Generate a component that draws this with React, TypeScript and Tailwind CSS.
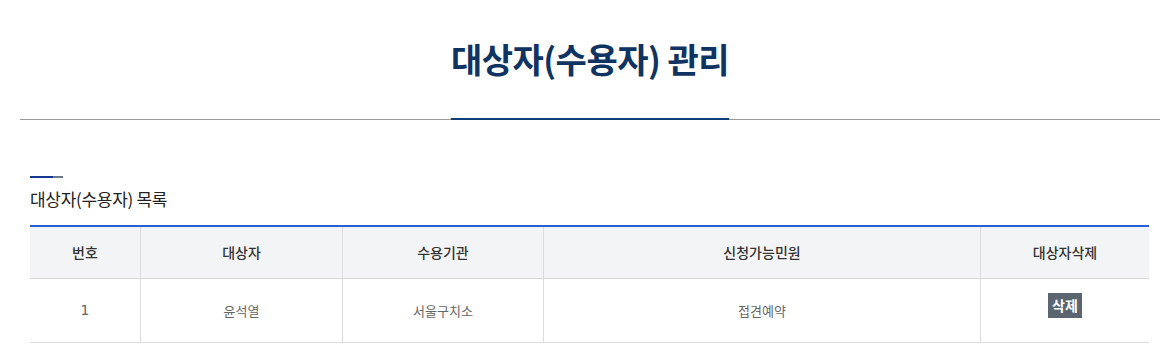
const font = "font-['Noto_Sans_CJK_KR','Noto_Sans',sans-serif]"

const columns = [
  { label: "번호", width: "w-[110px]" },
  { label: "대상자", width: "w-[202px]" },
  { label: "수용기관", width: "w-[201px]" },
  { label: "신청가능민원", width: "w-[437px]" },
  { label: "대상자삭제", width: "flex-1" },
]

const rows = [{ no: 1, name: "윤석열", agency: "서울구치소", service: "접견예약" }]

export default function App() {
  return (
    <div className={`${font} min-h-[360px] bg-white`}>
      <div className="ml-[20px] w-[1140px]">
        {/* page title with underline */}
        <div className="flex justify-center border-b border-[#9a9a9a] pt-[35px]">
          <h1 className="-mb-px border-b-2 border-[#0d3f78] pb-[35px] text-[34px] font-bold leading-[48px] tracking-[-0.5px] text-[#0f3462]">
            대상자(수용자) 관리
          </h1>
        </div>

        <section className="px-[10px] pt-[56px]">
          <div className="flex h-[2px] w-[33px]">
            <span className="w-[23px] bg-[#16378f]" />
            <span className="flex-1 bg-[#6b7a8c]" />
          </div>
          <h2 className="mt-[9px] text-[17px] leading-[24px] tracking-[-0.3px] text-[#222]">대상자(수용자) 목록</h2>

          <div className="mt-[14px] w-[1119px] border-t-2 border-[#2a5ed6]">
            <div className="flex h-[52px] border-b border-[#d6d6d6] bg-[#f3f4f6]">
              {columns.map((c, i) => (
                <div
                  key={c.label}
                  className={`${c.width} flex items-center justify-center text-[14px] font-medium text-[#333] ${i > 0 ? "border-l border-[#dcdcdc]" : ""}`}
                >
                  {c.label}
                </div>
              ))}
            </div>
            {rows.map((r) => (
              <div key={r.no} className="flex h-[64px] border-b border-[#dcdcdc] text-[13px] text-[#666]">
                <div className="flex w-[110px] items-center justify-center font-['DejaVu_Sans',sans-serif] text-[14px]">
                  {r.no}
                </div>
                <div className="flex w-[202px] items-center justify-center border-l border-[#dcdcdc]">{r.name}</div>
                <div className="flex w-[201px] items-center justify-center border-l border-[#dcdcdc]">{r.agency}</div>
                <div className="flex w-[437px] items-center justify-center border-l border-[#dcdcdc]">{r.service}</div>
                <div className="flex flex-1 items-center justify-center border-l border-[#dcdcdc]">
                  <button className="mb-[10px] h-[25px] bg-[#5a6570] px-[4px] text-[14px] font-bold leading-[25px] text-white">
                    삭제
                  </button>
                </div>
              </div>
            ))}
          </div>
        </section>
      </div>
    </div>
  )
}
